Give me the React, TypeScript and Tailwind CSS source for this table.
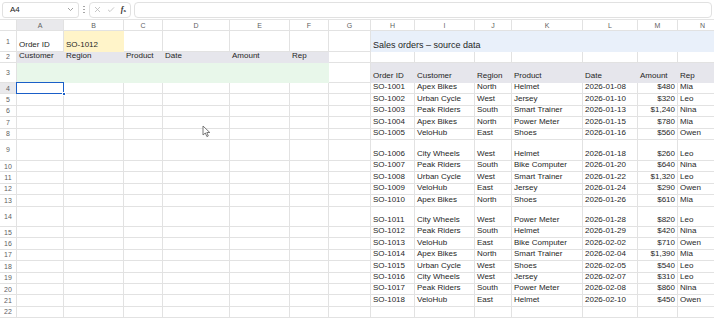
import type { ReactNode } from "react";

/**
 * Spreadsheet view: an empty report block on the left, sales source data on the right.
 */

type Order = [string, string, string, string, string, string, string];

const orders: Order[] = [
  ["SO-1001", "Apex Bikes", "North", "Helmet", "2026-01-08", "$480", "Mia"],
  ["SO-1002", "Urban Cycle", "West", "Jersey", "2026-01-10", "$320", "Leo"],
  ["SO-1003", "Peak Riders", "South", "Smart Trainer", "2026-01-13", "$1,240", "Nina"],
  ["SO-1004", "Apex Bikes", "North", "Power Meter", "2026-01-15", "$780", "Mia"],
  ["SO-1005", "VeloHub", "East", "Shoes", "2026-01-16", "$560", "Owen"],
  ["SO-1006", "City Wheels", "West", "Helmet", "2026-01-18", "$260", "Leo"],
  ["SO-1007", "Peak Riders", "South", "Bike Computer", "2026-01-20", "$640", "Nina"],
  ["SO-1008", "Urban Cycle", "West", "Smart Trainer", "2026-01-22", "$1,320", "Leo"],
  ["SO-1009", "VeloHub", "East", "Jersey", "2026-01-24", "$290", "Owen"],
  ["SO-1010", "Apex Bikes", "North", "Shoes", "2026-01-26", "$610", "Mia"],
  ["SO-1011", "City Wheels", "West", "Power Meter", "2026-01-28", "$820", "Leo"],
  ["SO-1012", "Peak Riders", "South", "Helmet", "2026-01-29", "$420", "Nina"],
  ["SO-1013", "VeloHub", "East", "Bike Computer", "2026-02-02", "$710", "Owen"],
  ["SO-1014", "Apex Bikes", "North", "Smart Trainer", "2026-02-04", "$1,390", "Mia"],
  ["SO-1015", "Urban Cycle", "West", "Shoes", "2026-02-05", "$540", "Leo"],
  ["SO-1016", "City Wheels", "West", "Jersey", "2026-02-07", "$310", "Leo"],
  ["SO-1017", "Peak Riders", "South", "Power Meter", "2026-02-08", "$860", "Nina"],
  ["SO-1018", "VeloHub", "East", "Helmet", "2026-02-10", "$450", "Owen"],
];

const letters = ["A", "B", "C", "D", "E", "F", "G", "H", "I", "J", "K", "L", "M", "N"];
const reportHeaders = ["Customer", "Region", "Product", "Date", "Amount", "Rep"];
const sourceHeaders = ["Order ID", "Customer", "Region", "Product", "Date", "Amount", "Rep"];

function Cell({ children, className = "" }: { children?: ReactNode; className?: string }) {
  return (
    <div
      className={`flex items-end overflow-hidden whitespace-nowrap border-r border-b px-[2px] pb-[1px] leading-[10px] ${className || "border-[#e2e2e2]"}`}
    >
      {children}
    </div>
  );
}

function RowHead({ n, active }: { n: number; active?: boolean }) {
  return (
    <div
      className={`flex items-center justify-center border-r border-b border-[#e2e2e2] text-[7px] leading-none text-[#5f5f5f] ${active ? "bg-[#e9e9ec]" : "bg-white"}`}
    >
      {n}
    </div>
  );
}

function Cursor() {
  return (
    <svg className="pointer-events-none absolute left-[202px] top-[125px]" width="9" height="13" viewBox="0 0 9 13">
      <path d="M1 1 L1 10 L3.3 8 L4.9 11.6 L6.3 11 L4.8 7.5 L7.8 7.5 Z" fill="#fff" stroke="#6b6b6b" strokeWidth="0.9" strokeLinejoin="round" />
    </svg>
  );
}

function FormulaBar() {
  return (
    <div className="flex h-[20px] items-center gap-[3px] border-b border-[#e4e4e4] px-[2px]">
      <div className="flex h-[16px] w-[77px] items-center justify-between rounded-[3px] border border-[#e1e1e1] pl-[7px] pr-[4px] text-[8px] text-[#222]">
        <span>A4</span>
        <svg width="7" height="5" viewBox="0 0 7 5">
          <path d="M1 1 L3.5 3.5 L6 1" fill="none" stroke="#8a8a8a" strokeWidth="0.8" />
        </svg>
      </div>
      <div className="flex w-[4px] flex-col items-center gap-[1.5px]">
        <span className="size-[1.5px] rounded-full bg-[#9a9a9a]" />
        <span className="size-[1.5px] rounded-full bg-[#9a9a9a]" />
        <span className="size-[1.5px] rounded-full bg-[#9a9a9a]" />
      </div>
      <div className="flex h-[16px] w-[42px] items-center justify-between rounded-[4px] border border-[#e1e1e1] px-[4px]">
        <svg width="7" height="7" viewBox="0 0 7 7">
          <path d="M1 1 L6 6 M6 1 L1 6" stroke="#b9b9b9" strokeWidth="0.8" />
        </svg>
        <svg width="8" height="7" viewBox="0 0 8 7">
          <path d="M1 3.8 L3 5.6 L7 1.4" fill="none" stroke="#b9b9b9" strokeWidth="0.8" />
        </svg>
        <span className="text-[8px] font-bold italic leading-none text-[#333] [font-family:'Liberation_Serif',serif]">
          f<span className="text-[5px] not-italic">x</span>
        </span>
      </div>
      <div className="h-[16px] flex-1 rounded-[4px] border border-[#e1e1e1]" />
    </div>
  );
}

export default function App() {
  const rows: ReactNode[] = [];

  for (let r = 1; r <= 22; r++) {
    rows.push(<RowHead key={`h${r}`} n={r} active={r === 4} />);

    if (r === 1) {
      rows.push(<Cell key="a1">Order ID</Cell>);
      rows.push(<Cell key="b1" className="border-[#fff4c9] bg-[#fff4c9]">SO-1012</Cell>);
      for (let c = 2; c < 7; c++) rows.push(<Cell key={`1-${c}`} />);
      rows.push(
        <Cell key="h1" className="col-span-7 border-[#e9f0fa] bg-[#e9f0fa] text-[9px]">
          Sales orders – source data
        </Cell>
      );
      continue;
    }

    if (r === 2) {
      reportHeaders.forEach((t) =>
        rows.push(<Cell key={`2-${t}`} className="border-[#e6e6ec] bg-[#e6e6ec]">{t}</Cell>)
      );
      for (let c = 6; c < 14; c++) rows.push(<Cell key={`2-${c}`} />);
      continue;
    }

    if (r === 3) {
      for (let c = 0; c < 6; c++) rows.push(<Cell key={`3-${c}`} className="border-[#e8f7ea] bg-[#e8f7ea]" />);
      rows.push(<Cell key="g3" />);
      sourceHeaders.forEach((t) =>
        rows.push(<Cell key={`3-${t}`} className="border-[#e6e6ec] bg-[#e6e6ec]">{t}</Cell>)
      );
      continue;
    }

    for (let c = 0; c < 7; c++) {
      if (r === 4 && c === 0) {
        rows.push(
          <div key="a4" className="relative border-r border-b border-[#e2e2e2]">
            <div className="absolute -left-px -top-px bottom-[-1px] right-[-1px] border border-[#1a5fc8]" />
            <div className="absolute bottom-[-2.5px] right-[-2.5px] size-[4px] border border-white bg-[#1a5fc8]" />
          </div>
        );
      } else {
        rows.push(<Cell key={`${r}-${c}`} />);
      }
    }

    const order = r <= 21 ? orders[r - 4] : undefined;
    for (let c = 0; c < 7; c++) {
      rows.push(
        <Cell key={`${r}-d${c}`} className={c === 5 ? "justify-end border-[#e2e2e2]" : ""}>
          {order?.[c]}
        </Cell>
      );
    }
  }

  return (
    <div className="relative h-[318px] w-[714px] overflow-hidden bg-white text-[8px] text-[#1f1f1f] [font-family:'Liberation_Sans',Arial,sans-serif]">
      <FormulaBar />
      <div className="grid grid-cols-[17px_47px_60px_39px_67px_60px_39px_42px_44px_60px_37px_71px_55px_40px_50px] grid-rows-[11px_21px_10.5px_20.5px_repeat(5,11.4px)_21px_repeat(4,11.4px)_20.5px_repeat(8,11.4px)]">
        <div className="border-r border-b border-[#e2e2e2]" />
        {letters.map((l) => (
          <div
            key={l}
            className={`flex items-center justify-center border-r border-b border-[#e2e2e2] text-[7px] leading-none text-[#5f5f5f] ${l === "A" ? "bg-[#e9e9ec]" : ""}`}
          >
            {l}
          </div>
        ))}
        {rows}
      </div>
      <Cursor />
    </div>
  );
}
